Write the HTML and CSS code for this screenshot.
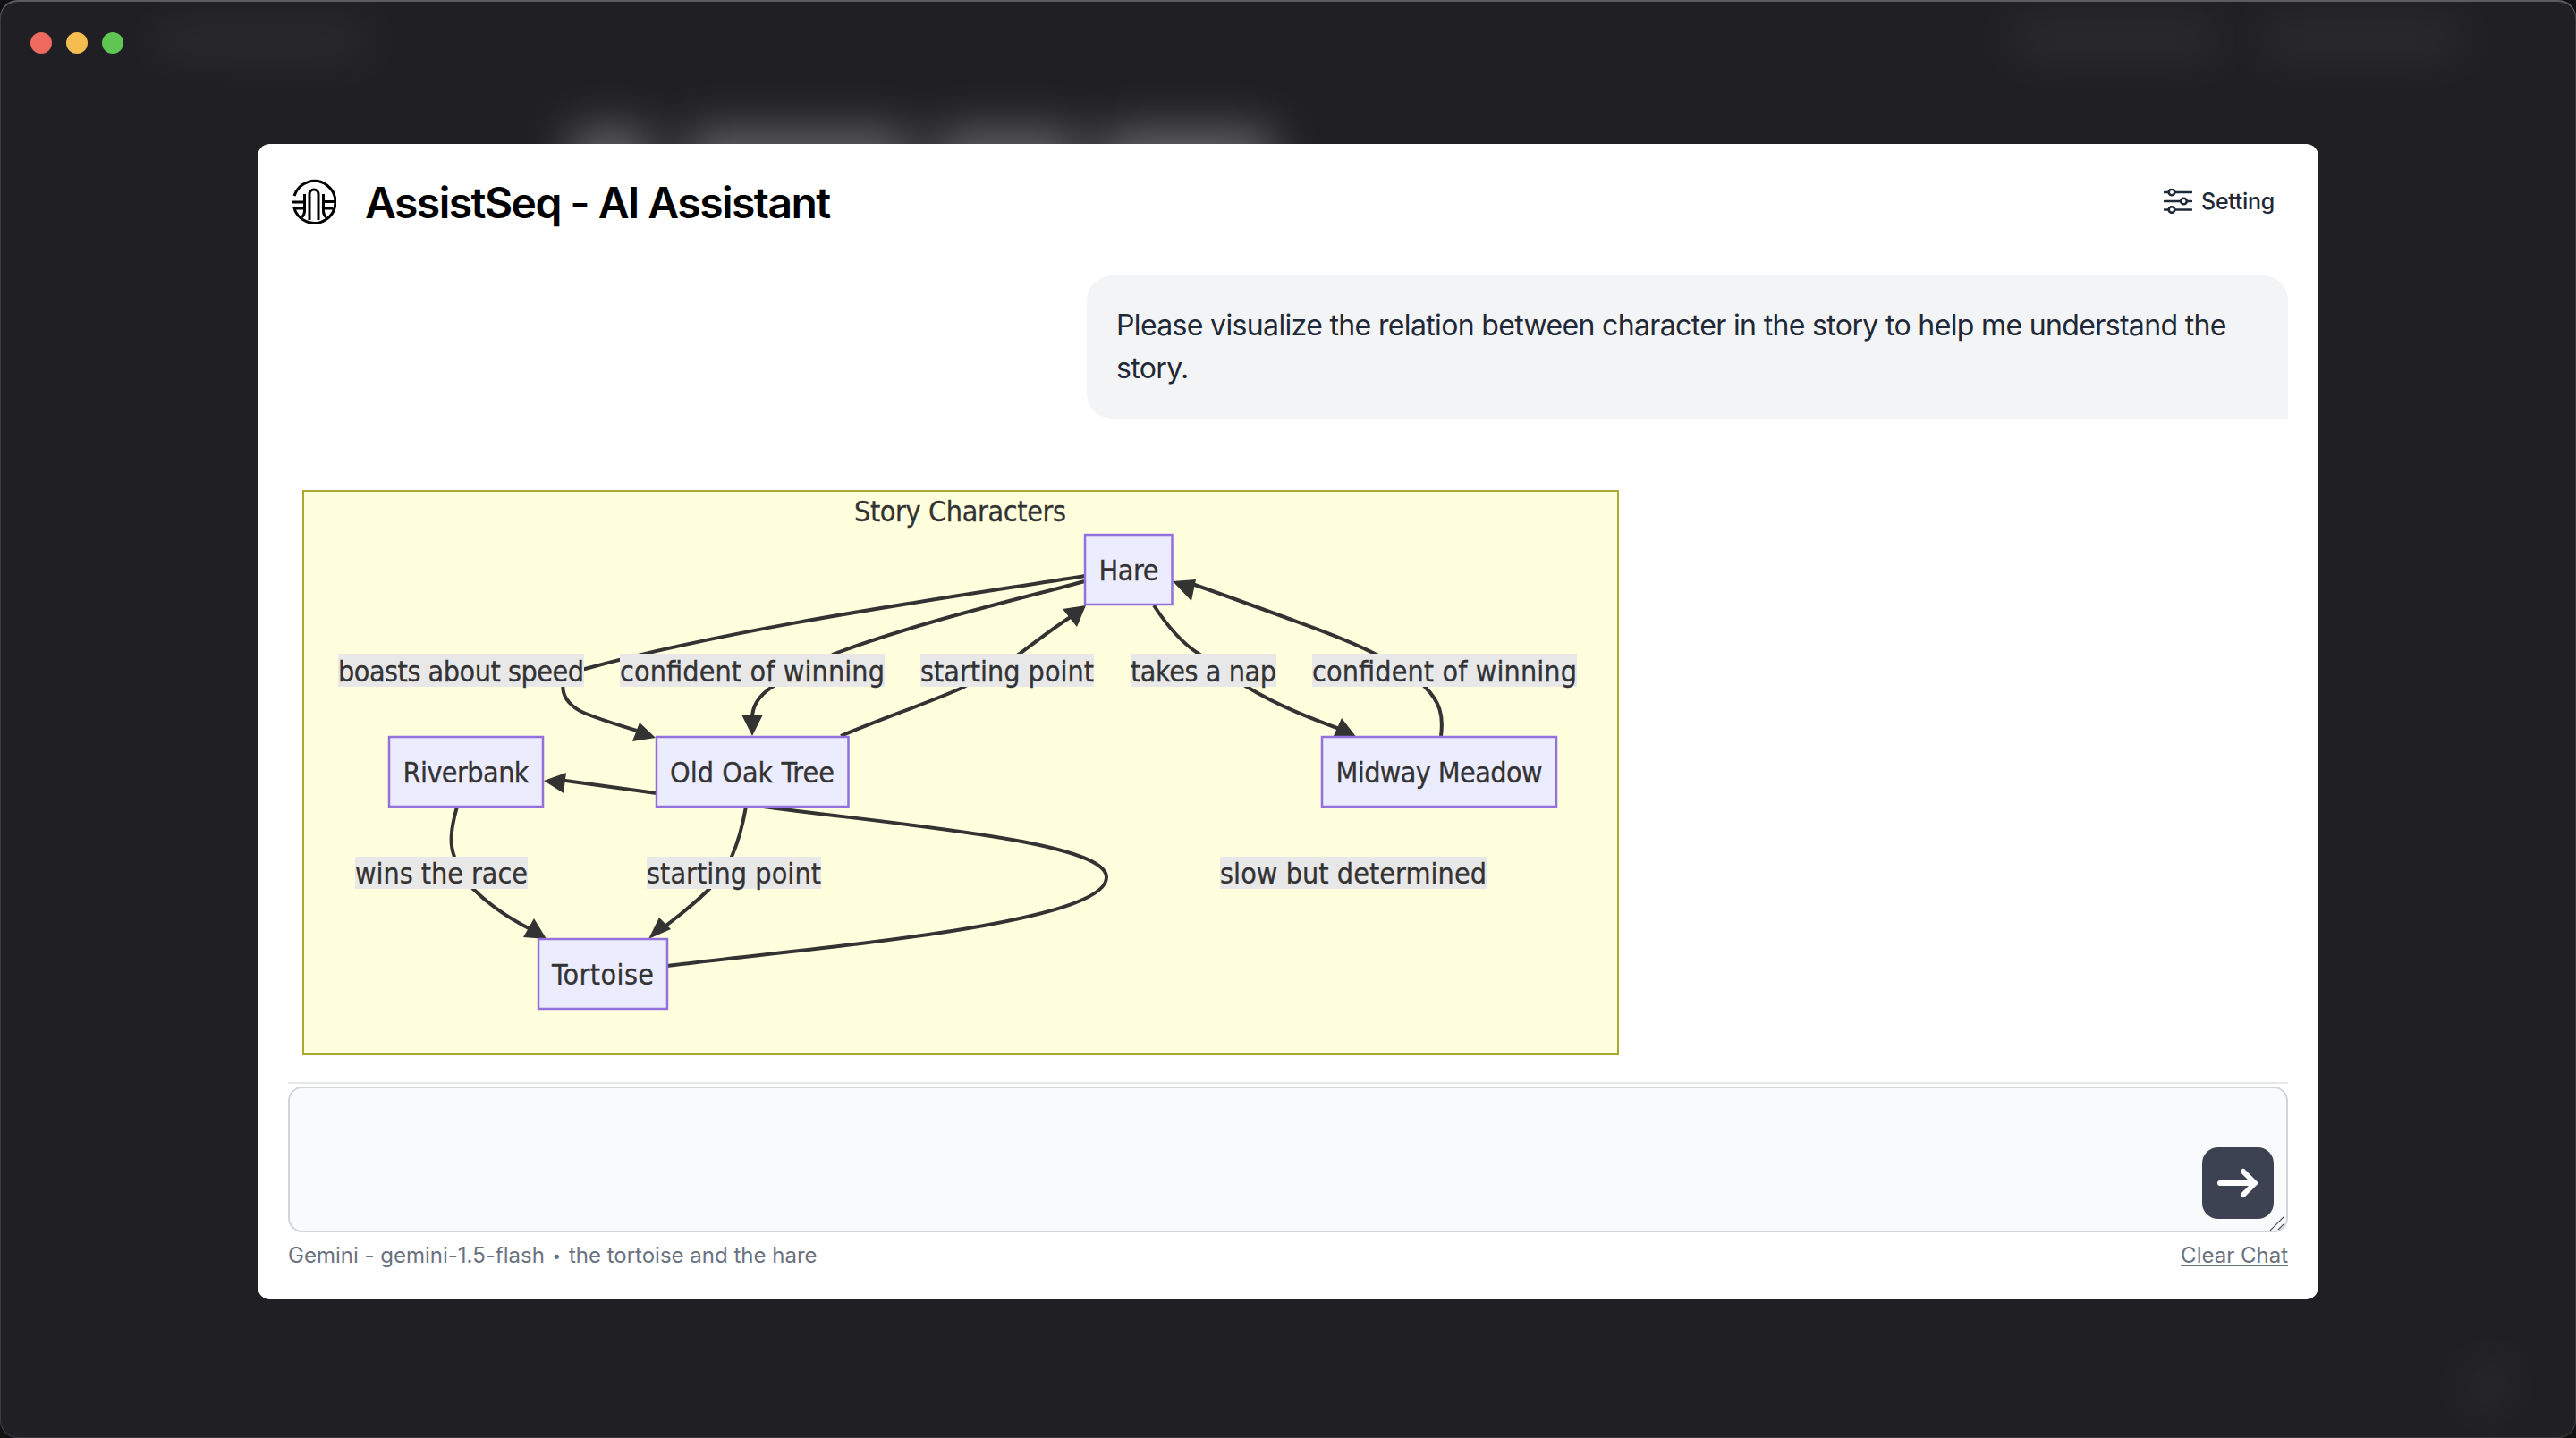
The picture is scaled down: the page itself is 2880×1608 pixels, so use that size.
FILE: index.html
```html
<!DOCTYPE html>
<html lang="en">

<head>
  <meta charset="UTF-8">
  <meta name="viewport" content="width=device-width, initial-scale=1.0">
  <title>AssistSeq - AI Assistant</title>
  <link rel="stylesheet" href="styles.css">
</head>

<body>
  <div class="window">
    <div class="traffic">
      <span class="dot dot-red"></span>
      <span class="dot dot-yellow"></span>
      <span class="dot dot-green"></span>
    </div>

    <!-- blurred page behind the modal -->
    <div class="smudge smudge-tl"></div>
    <div class="smudge smudge-tr1"></div>
    <div class="smudge smudge-tr2"></div>
    <div class="smudge smudge-br"></div>
    <div class="smudge smudge-h1"></div>
    <div class="smudge smudge-h2"></div>
    <div class="smudge smudge-h3"></div>
    <div class="smudge smudge-h4"></div>

    <main class="modal">
      <header class="modal-head">
        <div class="brand">
          <svg class="logo" viewBox="0 0 50 50" fill="none" stroke="#000" stroke-width="3">
            <path d="M3 19A23.5 23.5 0 1 1 2.5 31" />
            <path d="M20 46V17a5 5 0 0 1 10 0V46" />
            <path d="M14.5 17V36c0 3 -1 5 -3 7M35.500 17V36c0 3 1 5 3 7" />
            <path d="M1 26H14.500M4 33H14.500M35.500 25.500H48M35.500 33H46" />
          </svg>
          <h1 class="title">AssistSeq - AI Assistant</h1>
        </div>
        <button class="setting">
          <svg class="setting-icon" viewBox="0 0 32 28" fill="none" stroke="#1f2937" stroke-width="2.6" stroke-linecap="round">
            <path d="M1 4H5.500M12.500 4H31M1 14H19M26 14H31M1 23.500H5.500M12.500 23.500H31" />
            <circle cx="9" cy="4" r="3.300" />
            <circle cx="22.500" cy="14" r="3.300" />
            <circle cx="9" cy="23.500" r="3.300" />
          </svg>
          Setting
        </button>
      </header>

      <section class="bubble">Please visualize the relation between character in the story to help me understand the story.</section>

      <svg class="diagram" viewBox="338 548 1472 632">
        <rect class="cluster" x="338.500" y="548.500" width="1471" height="631" />
        <text class="cluster-title" x="1073.500" y="583" textLength="237">Story Characters</text>

        <path class="edge" d="M1213 644C1050 670 830 700 654 748C620 752 622 785 655 798C680 808 700 813 718 819" />
        <path class="edge" d="M1213 650C1130 672 1020 698 933 731C880 760 841 770 841 803" />
        <path class="edge" d="M940 823C990 802 1040 785 1076 769C1100 755 1120 745 1140 731C1165 712 1185 697 1203 686" />
        <path class="edge" d="M1290 677C1305 700 1320 718 1340 731C1360 745 1375 757 1394 768C1430 790 1470 805 1500 816" />
        <path class="edge" d="M1611 823C1614 800 1610 785 1593 768C1580 753 1560 742 1537 731C1500 712 1460 699 1433 689C1400 677 1365 664 1330 652" />
        <path class="edge" d="M734 887L625 872" />
        <path class="edge" d="M511 902C503 930 503 945 508 958C515 975 522 985 529 994C545 1010 565 1025 595 1040" />
        <path class="edge" d="M834 902C830 925 826 940 818 958C810 975 800 985 793 994C775 1012 758 1025 738 1040" />
        <path class="edge" d="M746 1080C880 1062 1237 1036 1237 981C1237 940 1000 922 853 902" />

        <polygon class="arrow" points="733,825 715,808 707,829" />
        <polygon class="arrow" points="841,823 829,799 853,799" />
        <polygon class="arrow" points="1214,677 1188,681 1204,701" />
        <polygon class="arrow" points="1517,825 1500,803 1490,825" />
        <polygon class="arrow" points="1311,650 1337,648 1332,672" />
        <polygon class="arrow" points="608,873 633,864 630,887" />
        <polygon class="arrow" points="611,1050 597,1027 585,1048" />
        <polygon class="arrow" points="725,1050 737,1026 750,1039" />

        <rect class="label-bg" x="378" y="731" width="275" height="37" />
        <text class="label" x="515.500" y="760" textLength="275">boasts about speed</text>
        <rect class="label-bg" x="693" y="731" width="296" height="37" />
        <text class="label" x="841" y="760" textLength="296">confident of winning</text>
        <rect class="label-bg" x="1029" y="731" width="194" height="37" />
        <text class="label" x="1126" y="760" textLength="194">starting point</text>
        <rect class="label-bg" x="1264" y="731" width="163" height="37" />
        <text class="label" x="1345.500" y="760" textLength="163">takes a nap</text>
        <rect class="label-bg" x="1467" y="731" width="296" height="37" />
        <text class="label" x="1615" y="760" textLength="296">confident of winning</text>
        <rect class="label-bg" x="397" y="958" width="193" height="36" />
        <text class="label" x="493.500" y="986" textLength="193">wins the race</text>
        <rect class="label-bg" x="723" y="958" width="195" height="36" />
        <text class="label" x="820.500" y="986" textLength="195">starting point</text>
        <rect class="label-bg" x="1364" y="958" width="298" height="36" />
        <text class="label" x="1513" y="986" textLength="298">slow but determined</text>

        <rect class="node" x="435" y="824" width="172" height="78" />
        <text class="label" x="521" y="873" textLength="141">Riverbank</text>
        <rect class="node" x="734" y="824" width="214.500" height="78" />
        <text class="label" x="841" y="873" textLength="184">Old Oak Tree</text>
        <rect class="node" x="602" y="1050" width="144" height="78" />
        <text class="label" x="674" y="1099" textLength="114">Tortoise</text>
        <rect class="node" x="1213" y="598" width="97.500" height="78" />
        <text class="label" x="1262" y="647" textLength="67">Hare</text>
        <rect class="node" x="1478" y="824" width="262" height="78" />
        <text class="label" x="1609" y="873" textLength="231">Midway Meadow</text>
      </svg>

      <div class="composer">
        <textarea class="prompt"></textarea>
        <svg class="grip" viewBox="0 0 20 20" fill="none" stroke="#555" stroke-width="1.2">
          <path d="M2 18L17 3M11 17L17 11" />
        </svg>
        <button class="send">
          <svg viewBox="0 0 80 80" fill="none" stroke="#fff" stroke-width="6" stroke-linecap="round" stroke-linejoin="round">
            <path d="M20 40H59M46 27L59 40L46 53" />
          </svg>
        </button>
      </div>

      <footer class="foot">
        <span>Gemini - gemini-1.5-flash <span class="sep">•</span> the tortoise and the hare</span>
        <a class="clear" href="#">Clear Chat</a>
      </footer>
    </main>
  </div>
</body>

</html>
```

FILE: styles.css
```css
html,
body {
  margin: 0;
  height: 100%;
  background: #111;
}

.window {
  position: relative;
  height: 1608px;
  box-sizing: border-box;
  padding-top: 161px;
  display: flex;
  justify-content: center;
  align-items: flex-start;
  background: #202024;
  border-radius: 20px;
  box-shadow: inset 0 2px 0 #5c5c60, inset 0 0 0 1px #3c3c40;
  overflow: hidden;
  font-family: Inter, "Liberation Sans", sans-serif;
}

.traffic {
  position: absolute;
  top: 36px;
  left: 34px;
  display: flex;
  gap: 16px;
}

.dot {
  width: 24px;
  height: 24px;
  border-radius: 50%;
}

.dot-red { background: #ee6a5f; }
.dot-yellow { background: #f5bd4f; }
.dot-green { background: #61c554; }

.smudge {
  position: absolute;
  background: #fff;
  filter: blur(26px);
}

.smudge-tl { left: 170px; top: 30px; width: 240px; height: 30px; opacity: 0.07; }
.smudge-tr1 { left: 2250px; top: 26px; width: 230px; height: 34px; opacity: 0.07; }
.smudge-tr2 { left: 2530px; top: 26px; width: 220px; height: 34px; opacity: 0.07; }
.smudge-br { left: 2760px; top: 1530px; width: 50px; height: 40px; opacity: 0.06; }
.smudge-h1 { left: 638px; top: 146px; width: 90px; height: 70px; opacity: 0.32; }
.smudge-h2 { left: 768px; top: 146px; width: 250px; height: 70px; opacity: 0.3; }
.smudge-h3 { left: 1048px; top: 146px; width: 160px; height: 70px; opacity: 0.3; }
.smudge-h4 { left: 1233px; top: 146px; width: 190px; height: 70px; opacity: 0.32; }

.modal {
  position: relative;
  box-sizing: border-box;
  width: 2304px;
  height: 1292px;
  padding: 0 34px;
  background: #fff;
  border-radius: 14px;
}

.modal-head {
  display: flex;
  justify-content: space-between;
  align-items: center;
  height: 127px;
  margin-bottom: 20px;
  padding: 0 15px 0 4px;
}

.brand {
  display: flex;
  align-items: center;
  gap: 32px;
}

.logo {
  width: 50px;
  height: 50px;
}

.title {
  margin: 3px 0 0;
  font-size: 48px;
  font-weight: 600;
  letter-spacing: -1.55px;
  color: #000;
}

.setting {
  display: flex;
  align-items: center;
  gap: 10px;
  padding: 0;
  border: none;
  background: none;
  font-family: inherit;
  font-size: 25px;
  font-weight: 500;
  letter-spacing: -0.3px;
  color: #1f2937;
}

.setting-icon {
  width: 32px;
  height: 28px;
}

.bubble {
  box-sizing: border-box;
  width: 1343px;
  height: 160px;
  margin-left: auto;
  padding: 32px 32px 32px 33px;
  font-size: 32px;
  line-height: 48px;
  letter-spacing: -0.65px;
  color: #1f2937;
  background: #f3f4f6;
  border-radius: 28px 28px 0 28px;
}

.diagram {
  display: block;
  width: 1472px;
  height: 632px;
  margin: 80px 0 30px 16px;
}

.cluster {
  fill: #ffffde;
  stroke: #aaaa33;
  stroke-width: 3;
}

.cluster-title,
.label {
  font-family: "DejaVu Sans Condensed", "DejaVu Sans", sans-serif;
  font-size: 32px;
  fill: #333;
  stroke: #333;
  stroke-width: 0.3;
  text-anchor: middle;
}

.label {
  transform: translateY(1.5px);
}

.edge {
  fill: none;
  stroke: #333;
  stroke-width: 4;
}

.arrow {
  fill: #333;
}

.label-bg {
  fill: #e8e8e8;
}

.node {
  fill: #ececff;
  stroke: #9370db;
  stroke-width: 2.500;
}

.composer {
  position: relative;
  padding-top: 3px;
  border-top: 2px solid #e5e7eb;
}

.prompt {
  display: block;
  box-sizing: border-box;
  width: 100%;
  height: 163px;
  padding: 16px;
  background: #f9fafb;
  border: 2px solid #d1d5db;
  border-radius: 16px;
  outline: none;
  resize: none;
}

.grip {
  position: absolute;
  right: 2px;
  bottom: 0;
  width: 20px;
  height: 20px;
}

.send {
  position: absolute;
  right: 16px;
  bottom: 15px;
  width: 80px;
  height: 80px;
  padding: 0;
  border: none;
  border-radius: 18px;
  background: #3c4251;
}

.send svg {
  display: block;
  width: 80px;
  height: 80px;
}

.foot {
  display: flex;
  justify-content: space-between;
  align-items: center;
  height: 50px;
  font-size: 24px;
  color: #6b7280;
}

.sep {
  font-size: 17px;
  margin: 0 2px;
  vertical-align: 2px;
}

.clear {
  color: #6b7280;
}
```
